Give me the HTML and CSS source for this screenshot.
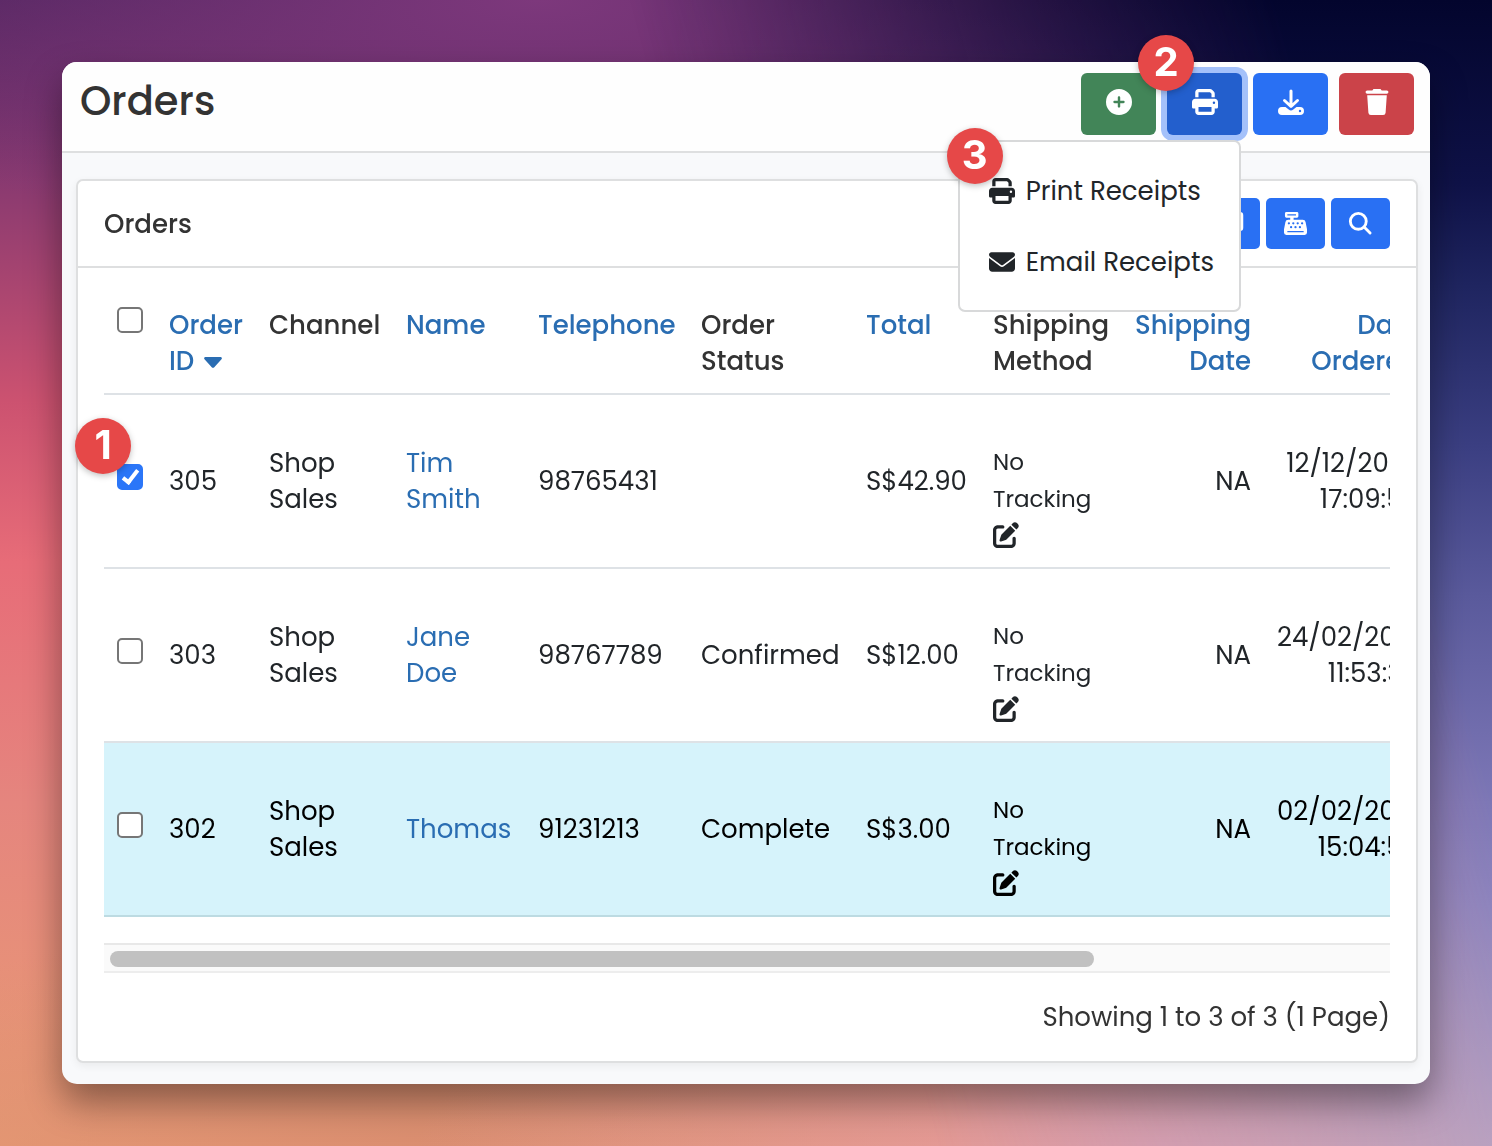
FILE: index.html
```html
<!DOCTYPE html>
<html lang="en">
<head>
  <meta charset="UTF-8">
  <meta name="viewport" content="width=device-width, initial-scale=1.0">
  <title>Orders</title>
  <link rel="stylesheet" href="styles.css">
</head>
<body>

  <!-- Shared icons -->
  <svg class="icon-defs" aria-hidden="true">
    <symbol id="icon-print" viewBox="0 0 512 512">
      <path fill="currentColor" d="M128 0C92.700 0 64 28.700 64 64v96h64V64h226.700L384 93.300V160h64V93.300c0-17-6.700-33.300-18.700-45.300L400 18.700C388 6.700 371.700 0 354.700 0H128zM384 352v32 64H128v-64-16-16h256zm64 32h32c17.700 0 32-14.300 32-32v-96c0-35.300-28.700-64-64-64H64c-35.300 0-64 28.700-64 64v96c0 17.700 14.300 32 32 32h32v64c0 35.300 28.700 64 64 64h256c35.300 0 64-28.700 64-64v-64zM432 248a24 24 0 1 1 0 48 24 24 0 1 1 0-48z"/>
    </symbol>
    <symbol id="icon-edit" viewBox="0 0 512 512">
      <path fill="currentColor" d="M471.600 21.700c-21.900-21.900-57.300-21.900-79.200 0L362.300 51.700l97.900 97.900 30.100-30.100c21.900-21.900 21.900-57.300 0-79.200L471.600 21.700zm-299.200 220c-6.100 6.100-10.800 13.600-13.500 21.900l-29.600 88.800c-2.900 8.600-.6 18.100 5.800 24.600s15.900 8.700 24.600 5.800l88.800-29.600c8.200-2.700 15.700-7.400 21.900-13.500L437.700 172.300 339.700 74.300 172.400 241.700zM96 64C43 64 0 107 0 160V416c0 53 43 96 96 96H352c53 0 96-43 96-96V320c0-17.700-14.300-32-32-32s-32 14.300-32 32v96c0 17.700-14.300 32-32 32H96c-17.700 0-32-14.300-32-32V160c0-17.700 14.300-32 32-32h96c17.700 0 32-14.300 32-32s-14.300-32-32-32H96z"/>
    </symbol>
  </svg>

  <div class="window">

    <header class="page-header">
      <h1>Orders</h1>
      <div class="actions">
        <button type="button" class="btn btn-success" aria-label="Add New">
          <svg class="icon" viewBox="0 0 512 512"><path fill="currentColor" d="M256 512A256 256 0 1 0 256 0a256 256 0 1 0 0 512zM232 344V280H168c-13.300 0-24-10.700-24-24s10.700-24 24-24h64V168c0-13.300 10.700-24 24-24s24 10.700 24 24v64h64c13.300 0 24 10.700 24 24s-10.700 24-24 24H280v64c0 13.300-10.700 24-24 24s-24-10.700-24-24z"/></svg>
        </button>
        <div class="dropdown">
          <button type="button" class="btn btn-primary show" aria-label="Print" aria-expanded="true">
            <svg class="icon"><use href="#icon-print"/></svg>
          </button>
          <ul class="dropdown-menu">
            <li><a href="#"><svg class="icon"><use href="#icon-print"/></svg> Print Receipts</a></li>
            <li><a href="#"><svg class="icon" viewBox="0 0 512 512"><path fill="currentColor" d="M48 64C21.500 64 0 85.500 0 112c0 15.100 7.100 29.300 19.200 38.400L236.800 313.600c11.400 8.500 27 8.500 38.400 0L492.800 150.400c12.100-9.100 19.200-23.300 19.200-38.400 0-26.500-21.500-48-48-48H48zM0 176V384c0 35.300 28.700 64 64 64H448c35.300 0 64-28.700 64-64V176L294.400 339.200c-22.800 17.100-54 17.100-76.800 0L0 176z"/></svg> Email Receipts</a></li>
            <li class="step step-3">3</li>
          </ul>
          <span class="step step-2">2</span>
        </div>
        <button type="button" class="btn btn-primary" aria-label="Export">
          <svg class="icon" viewBox="0 0 26 26">
            <path fill="none" stroke="currentColor" stroke-width="3" stroke-linecap="round" stroke-linejoin="round" d="M13 2v15M6.500 11.500L13 17.500l6.500-6"/>
            <path fill="currentColor" fill-rule="evenodd" d="M4 18h3.500l3.200 2.500a3.700 3.700 0 0 0 4.600 0l3.200-2.500H22a4 4 0 0 1 4 4 4 4 0 0 1-4 4H4a4 4 0 0 1-4-4 4 4 0 0 1 4-4zm18 2.800a1.200 1.200 0 1 0 0 2.400 1.200 1.200 0 0 0 0-2.400z"/>
          </svg>
        </button>
        <button type="button" class="btn btn-danger" aria-label="Delete">
          <svg class="icon" viewBox="0 0 26 26"><path fill="currentColor" d="M9.500 0h7l1.200 1.400h5.100a1.600 1.600 0 0 1 0 3.300H3.200a1.600 1.600 0 0 1 0-3.300h5.100zM3.200 6.300h19.600l-1.200 17.400a2.500 2.500 0 0 1-2.500 2.300H6.900a2.500 2.500 0 0 1-2.500-2.300z"/></svg>
        </button>
      </div>
    </header>

    <main class="card">
      <div class="card-header">
        <h2>Orders</h2>
        <div class="tools">
          <button type="button" class="btn btn-primary btn-sm" aria-label="Shop Display">
            <svg class="icon icon-wide" viewBox="0 0 26 23">
              <rect x="1.250" y="1.250" width="24.750" height="16.500" rx="2" fill="currentColor" fill-opacity="0.6" stroke="currentColor" stroke-width="2.500"/>
              <path fill="currentColor" d="M10 18h6l1 3h2v2H7v-2h2z"/>
            </svg>
          </button>
          <button type="button" class="btn btn-primary btn-sm" aria-label="Point of Sale">
            <svg class="icon" viewBox="0 0 24 24">
              <path fill="currentColor" fill-rule="evenodd" d="M2.500 0h11A1.500 1.500 0 0 1 15 1.500v3A1.500 1.500 0 0 1 13.500 6H10v2h9.500a3 3 0 0 1 3 2.500L24 18v3.500a2.500 2.500 0 0 1-2.500 2.500h-19A2.500 2.500 0 0 1 0 21.500V18l1.500-7.500A3 3 0 0 1 4.500 8H6.500V6h-4A1.500 1.500 0 0 1 1 4.500v-3A1.500 1.500 0 0 1 2.500 0zm1 2.300v1.400h9V2.300zM3.500 19.700V21h17v-1.300z"/>
              <path fill="none" stroke="#2970f3" stroke-width="2.400" stroke-linecap="round" stroke-dasharray="0 4.600" d="M5.100 11.800h14M7.400 15.800h10"/>
            </svg>
          </button>
          <button type="button" class="btn btn-primary btn-sm" aria-label="Filter">
            <svg class="icon" viewBox="0 0 24 24"><path fill="none" stroke="currentColor" stroke-width="3" stroke-linecap="round" d="M15.500 15.500l6.500 6.500M18 9.700a8.300 8.300 0 1 1-16.600 0 8.300 8.300 0 0 1 16.600 0z"/></svg>
          </button>
        </div>
      </div>

      <div class="card-body">
        <span class="step step-1">1</span>
        <div class="table-responsive">
          <table>
            <colgroup>
              <col class="col-check"><col class="col-id"><col class="col-channel"><col class="col-name"><col class="col-phone">
              <col class="col-status"><col class="col-total"><col class="col-method"><col class="col-shipped"><col class="col-date"><col>
            </colgroup>
            <thead>
              <tr>
                <th><input type="checkbox" aria-label="Select all"></th>
                <th><a href="#">Order ID <svg class="caret" viewBox="0 0 18 11"><path fill="currentColor" d="M1.500 0h15a1.300 1.300 0 0 1 1 2.200l-7 7.800a2 2 0 0 1-3 0l-7-7.800A1.300 1.300 0 0 1 1.500 0z"/></svg></a></th>
                <th>Channel</th>
                <th><a href="#">Name</a></th>
                <th><a href="#">Telephone</a></th>
                <th>Order Status</th>
                <th><a href="#">Total</a></th>
                <th>Shipping Method</th>
                <th class="text-end"><a href="#">Shipping Date</a></th>
                <th class="text-end"><a href="#">Date Ordered</a></th>
                <th></th>
              </tr>
            </thead>
            <tbody>
              <tr>
                <td><input type="checkbox" aria-label="Select order 305" checked></td>
                <td>305</td>
                <td>Shop Sales</td>
                <td><a href="#">Tim Smith</a></td>
                <td>98765431</td>
                <td></td>
                <td>S$42.90</td>
                <td><div class="tracking">No Tracking <svg class="icon"><use href="#icon-edit"/></svg></div></td>
                <td class="text-end">NA</td>
                <td class="text-end">12/12/2023 17:09:56</td>
                <td></td>
              </tr>
              <tr>
                <td><input type="checkbox" aria-label="Select order 303"></td>
                <td>303</td>
                <td>Shop Sales</td>
                <td><a href="#">Jane Doe</a></td>
                <td>98767789</td>
                <td>Confirmed</td>
                <td>S$12.00</td>
                <td><div class="tracking">No Tracking <svg class="icon"><use href="#icon-edit"/></svg></div></td>
                <td class="text-end">NA</td>
                <td class="text-end">24/02/2023 11:53:36</td>
                <td></td>
              </tr>
              <tr class="table-info">
                <td><input type="checkbox" aria-label="Select order 302"></td>
                <td>302</td>
                <td>Shop Sales</td>
                <td><a href="#">Thomas</a></td>
                <td>91231213</td>
                <td>Complete</td>
                <td>S$3.00</td>
                <td><div class="tracking">No Tracking <svg class="icon"><use href="#icon-edit"/></svg></div></td>
                <td class="text-end">NA</td>
                <td class="text-end">02/02/2023 15:04:56</td>
                <td></td>
              </tr>
            </tbody>
          </table>
        </div>
        <div class="scrollbar"><div class="scrollbar-thumb"></div></div>
        <p class="results">Showing 1 to 3 of 3 (1 Page)</p>
      </div>
    </main>

  </div>

</body>
</html>
```

FILE: styles.css
```css
* { box-sizing: border-box; }
body {
  font-family: Poppins, Inter, sans-serif;
  font-size: 26px;
  line-height: 36px;
  color: #212529;
  margin: 0;
  padding: 62px;
  min-height: 100vh;
  background:
    radial-gradient(ellipse 55% 22% at 36% 0%, #7d387c 0%, rgba(125, 56, 124, 0) 100%),
    radial-gradient(ellipse 50% 20% at 78% 100%, #e39aa2 0%, rgba(227, 154, 162, 0) 100%),
    radial-gradient(ellipse 50% 20% at 30% 100%, #da8e70 0%, rgba(218, 142, 112, 0) 100%),
    linear-gradient(to bottom, #4d235c 0%, #6e2f68 9%, #8a3a70 16%, #cc5270 35%, #e76c78 49%, #e5857e 70%, #e99b74 100%);
}
/* Blue side of the backdrop, faded in towards the right */
body::before {
  content: "";
  position: fixed;
  inset: 0;
  z-index: -1;
  background: linear-gradient(to bottom, #03052d 0%, #0f1248 16%, #1f2560 25%, #3b3f82 39%, #5a5a9c 52%, #7d77b6 70%, #8a84c0 79%, #b2a2c8 100%);
  mask-image: linear-gradient(75deg, transparent 52%, #000 88%);
}
a { color: #2a6db2; text-decoration: none; }
.icon-defs { position: absolute; width: 0; height: 0; }
.icon {
  width: 26px;
  height: 26px;
  flex: none;
  overflow: visible;
}

.window {
  background: #f8f9fb;
  border-radius: 15px;
  padding-bottom: 21px;
  box-shadow: 0 18px 36px rgba(0, 0, 0, 0.4);
}

/* Page header */
.page-header {
  display: flex;
  justify-content: space-between;
  align-items: flex-start;
  padding: 11px 16px 16px 18px;
  background: #fefefe;
  border-bottom: 2px solid #dedfe0;
  border-radius: 15px 15px 0 0;
}
h1 {
  margin: 0;
  font-size: 40px;
  line-height: 56px;
  font-weight: 500;
  color: #333;
}
.actions { display: flex; gap: 11px; }
.btn {
  display: flex;
  justify-content: center;
  align-items: center;
  width: 75px;
  height: 62px;
  padding: 0 0 4px;
  border: none;
  border-radius: 6px;
  color: #fff;
  cursor: pointer;
}
.btn-success { background: #428558; }
.btn-primary { background: #2970f3; }
.btn-danger { background: #cb4349; }
.btn.show {
  background: #235fcd;
  box-shadow: 0 0 0 6px #a4c1fa;
}
.btn-sm {
  width: auto;
  height: 51px;
  padding: 0 18px;
  border-radius: 5px;
}
.btn-sm .icon { width: 23px; height: 23px; }
.btn-sm .icon-wide { width: 26px; }

/* Dropdown */
.dropdown { position: relative; }
.dropdown-menu {
  position: absolute;
  top: 67px;
  right: 1px;
  z-index: 2;
  margin: 0;
  padding: 13px 0;
  list-style: none;
  background: #fff;
  border: 2px solid #d8d9da;
  border-radius: 7px;
}
.dropdown-menu a {
  display: flex;
  align-items: center;
  gap: 11px;
  height: 71px;
  padding: 0 25px 0 29px;
  color: #212529;
  white-space: nowrap;
}

/* Numbered steps */
.step {
  position: absolute;
  z-index: 3;
  width: 56px;
  height: 56px;
  border-radius: 50%;
  background: #e64848;
  box-shadow: 0 2px 6px rgba(0, 0, 0, 0.25);
  color: #fff;
  font-family: Inter, sans-serif;
  font-size: 40px;
  line-height: 54px;
  font-weight: 700;
  text-align: center;
}
.step-1 { top: 150px; left: -3px; }
.step-2 { top: -38px; left: -29px; }
.step-3 { top: -14px; left: -13px; }

/* Card */
.card {
  margin: 26px 12px 0 14px;
  background: #fff;
  border: 2px solid #dedfe0;
  border-radius: 7px;
  box-shadow: 0 3px 8px rgba(0, 0, 0, 0.06);
}
.card-header {
  display: flex;
  justify-content: space-between;
  align-items: center;
  padding: 17px 26px;
  border-bottom: 2px solid #dedfe0;
}
h2 {
  margin: 0;
  font-size: 26px;
  font-weight: 500;
  color: #333;
}
.tools { display: flex; gap: 6px; }
.card-body {
  position: relative;
  padding: 26px;
}
.results {
  margin: 26px 0 0;
  text-align: right;
  color: #333;
}

/* Orders table */
.table-responsive {
  overflow-x: auto;
  padding-bottom: 26px;
}
.scrollbar {
  padding: 6px 6px 4px;
  background: #fafafa;
  border-top: 2px solid #e8e8e8;
  border-bottom: 2px solid #ededed;
}
.scrollbar-thumb {
  width: 77.2%;
  height: 16px;
  border-radius: 8px;
  background: #c1c1c1;
}
table {
  width: 1665px;
  table-layout: fixed;
  border-spacing: 0;
}
.col-check { width: 52px; }
.col-id { width: 100px; }
.col-channel { width: 137px; }
.col-name { width: 132px; }
.col-phone { width: 163px; }
.col-status { width: 165px; }
.col-total { width: 127px; }
.col-method { width: 142px; }
.col-shipped { width: 142px; }
.col-date { width: 168px; }
th, td {
  padding: 12px 13px;
  border-bottom: 2px solid #dee2e6;
  text-align: left;
}
th {
  padding: 13px 13px 14px;
  vertical-align: top;
  font-weight: 500;
  color: #333;
}
.text-end { text-align: right; }
.table-info td {
  background: #d6f3fb;
  border-color: #bddbe2;
  color: #000;
}
.tracking {
  padding-top: 37px;
  font-size: 23px;
  line-height: 37px;
}
.tracking .icon { display: block; margin: 4px 0 7px; }
.caret {
  width: 18px;
  height: 11px;
  margin-left: 3px;
  vertical-align: middle;
}
input[type="checkbox"] {
  appearance: none;
  display: block;
  width: 26px;
  height: 26px;
  margin: 0 0 8px;
  background: #fff;
  border: 2px solid #767676;
  border-radius: 5px;
}
input[type="checkbox"]:checked {
  background: #2b76f8;
  border-color: #2b76f8;
}
input[type="checkbox"]:checked::after {
  content: "";
  display: block;
  box-sizing: border-box;
  width: 9px;
  height: 17px;
  margin: 1px 0 0 7px;
  border: solid #fff;
  border-width: 0 4px 4px 0;
  transform: rotate(38deg);
}
```
